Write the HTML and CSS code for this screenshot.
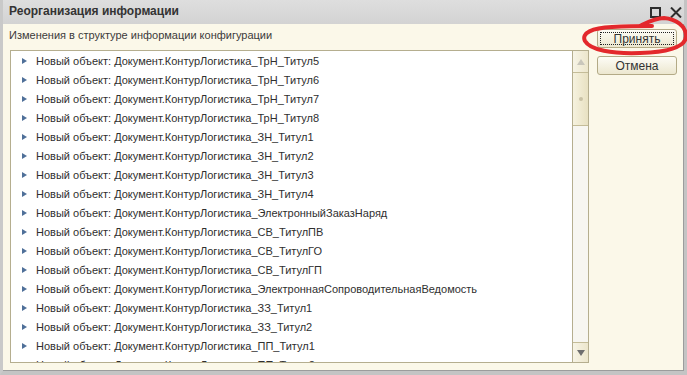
FILE: index.html
```html
<!DOCTYPE html>
<html lang="ru">
<head>
<meta charset="utf-8">
<title>Реорганизация информации</title>
<link rel="stylesheet" href="styles.css">
</head>
<body>
<div class="window">
  <div class="titlebar">
    <span class="title">Реорганизация информации</span>
    <div class="title-icons">
      <span class="icon-max"></span>
      <svg class="icon-close" width="12" height="11" viewBox="0 0 12 11"><path d="M1 0.5 L11 10.5 M11 0.5 L1 10.5" stroke="#2e2e2e" stroke-width="2"/></svg>
    </div>
  </div>
  <div class="content">
    <div class="main">
      <div class="label">Изменения в структуре информации конфигурации</div>
      <div class="listbox">
        <ul class="rows">
          <li class="row"><span class="tri"></span>Новый объект: Документ.КонтурЛогистика_ТрН_Титул5</li>
          <li class="row"><span class="tri"></span>Новый объект: Документ.КонтурЛогистика_ТрН_Титул6</li>
          <li class="row"><span class="tri"></span>Новый объект: Документ.КонтурЛогистика_ТрН_Титул7</li>
          <li class="row"><span class="tri"></span>Новый объект: Документ.КонтурЛогистика_ТрН_Титул8</li>
          <li class="row"><span class="tri"></span>Новый объект: Документ.КонтурЛогистика_ЗН_Титул1</li>
          <li class="row"><span class="tri"></span>Новый объект: Документ.КонтурЛогистика_ЗН_Титул2</li>
          <li class="row"><span class="tri"></span>Новый объект: Документ.КонтурЛогистика_ЗН_Титул3</li>
          <li class="row"><span class="tri"></span>Новый объект: Документ.КонтурЛогистика_ЗН_Титул4</li>
          <li class="row"><span class="tri"></span>Новый объект: Документ.КонтурЛогистика_ЭлектронныйЗаказНаряд</li>
          <li class="row"><span class="tri"></span>Новый объект: Документ.КонтурЛогистика_СВ_ТитулПВ</li>
          <li class="row"><span class="tri"></span>Новый объект: Документ.КонтурЛогистика_СВ_ТитулГО</li>
          <li class="row"><span class="tri"></span>Новый объект: Документ.КонтурЛогистика_СВ_ТитулГП</li>
          <li class="row"><span class="tri"></span>Новый объект: Документ.КонтурЛогистика_ЭлектроннаяСопроводительнаяВедомость</li>
          <li class="row"><span class="tri"></span>Новый объект: Документ.КонтурЛогистика_ЗЗ_Титул1</li>
          <li class="row"><span class="tri"></span>Новый объект: Документ.КонтурЛогистика_ЗЗ_Титул2</li>
          <li class="row"><span class="tri"></span>Новый объект: Документ.КонтурЛогистика_ПП_Титул1</li>
          <li class="row"><span class="tri"></span>Новый объект: Документ.КонтурЛогистика_ПП_Титул2</li>
        </ul>
        <div class="scrollbar">
          <div class="sb-btn"><span class="arrow-up"></span></div>
          <div class="sb-thumb"><span class="grip"></span></div>
          <div class="sb-track"></div>
          <div class="sb-btn sb-down"><span class="arrow-down"></span></div>
        </div>
      </div>
    </div>
    <div class="buttons">
      <button class="btn btn-default"><span class="focus">Принять</span></button>
      <button class="btn">Отмена</button>
    </div>
  </div>
  <svg class="annotation" width="687" height="80" viewBox="0 0 687 80">
    <path d="M640 26 C 648 22, 655 18, 664 18 C 676 19, 686 26, 686 36 C 686 47, 668 52, 640 53 C 612 54, 590 50, 585 41 C 581 33, 592 28, 612 27 C 630 26, 645 26, 652 26" fill="none" stroke="#e3282c" stroke-width="4" stroke-linecap="round"/>
  </svg>
</div>
</body>
</html>
```

FILE: styles.css
```css
* { box-sizing: border-box; }
html, body { margin: 0; padding: 0; }
body {
  width: 687px;
  height: 375px;
  overflow: hidden;
  font-family: "Liberation Sans", Arial, sans-serif;
  background: #c8c8c8;
}
.window {
  position: relative;
  width: 687px;
  height: 375px;
  display: flex;
  flex-direction: column;
  background: #d6d6d6;
  border-left: 3px solid #c9c9c9;
  border-right: 3px solid #c4c4c4;
  border-bottom: 4px solid #c4c4c4;
}
.titlebar {
  height: 24px;
  flex: none;
  display: flex;
  align-items: center;
  justify-content: space-between;
  padding: 0 2px 2px 6px;
  background: linear-gradient(#dedede, #d3d3d3);
}
.title {
  font-weight: bold;
  font-size: 12px;
  color: #333;
}
.title-icons {
  display: flex;
  align-items: center;
  gap: 9px;
  padding-top: 3px;
}
.icon-max {
  width: 11px;
  height: 11px;
  border: 2px solid #2e2e2e;
}
.content {
  flex: 1;
  display: flex;
  background: #fbf8e9;
  border-right: 1px solid #9c9c9c;
  border-bottom: 1px solid #9c9c9c;
  padding: 0 0 0 7px;
}
.main {
  width: 579px;
  display: flex;
  flex-direction: column;
}
.label {
  font-size: 11px;
  line-height: 16px;
  color: #3b3b3b;
  padding-top: 3px;
  margin-left: -1px;
  margin-bottom: 7px;
}
.listbox {
  height: 313px;
  border: 1px solid #b5ae8f;
  background: #fff;
  display: flex;
  overflow: hidden;
}
.rows {
  flex: 1;
  margin: 0;
  padding: 0;
  list-style: none;
  overflow: hidden;
}
.row {
  height: 19px;
  display: flex;
  align-items: center;
  padding-left: 11px;
  font-size: 11px;
  color: #2f2f2f;
  white-space: nowrap;
}
.tri {
  width: 0;
  height: 0;
  border-top: 3.5px solid transparent;
  border-bottom: 3.5px solid transparent;
  border-left: 5px solid #4f7099;
  margin-right: 9px;
  margin-top: 1px;
}
.scrollbar {
  width: 16px;
  flex: none;
  display: flex;
  flex-direction: column;
  border-left: 1px solid #b5ae8f;
  background: #f7f6f1;
}
.sb-btn {
  height: 22px;
  display: flex;
  align-items: center;
  justify-content: center;
  background: linear-gradient(90deg, #f7f4e6, #ece6cc);
  border-bottom: 1px solid #c4bc98;
}
.sb-down {
  height: 20px;
  border-bottom: none;
  border-top: 1px solid #c4bc98;
}
.arrow-up {
  width: 0; height: 0;
  border-left: 4px solid transparent;
  border-right: 4px solid transparent;
  border-bottom: 6px solid #c9c6bb;
}
.arrow-down {
  width: 0; height: 0;
  border-left: 4px solid transparent;
  border-right: 4px solid transparent;
  border-top: 6px solid #6e6e6e;
}
.sb-thumb {
  height: 53px;
  display: flex;
  align-items: center;
  justify-content: center;
  background: linear-gradient(90deg, #f6f2df, #e8e1c2);
  border-bottom: 1px solid #c4bc98;
}
.grip {
  width: 4px;
  height: 4px;
  border-radius: 50%;
  background: #c9c2a6;
}
.sb-track { flex: 1; }
.buttons {
  display: flex;
  flex-direction: column;
  gap: 8px;
  padding: 5px 0 0 8px;
}
.btn {
  width: 80px;
  height: 19px;
  padding: 0;
  font-family: "Liberation Sans", Arial, sans-serif;
  font-size: 12px;
  color: #333;
  background: linear-gradient(#fdfcf6, #ece7cf);
  border: 1px solid #b3aa86;
  border-radius: 3px;
  display: flex;
  align-items: center;
  justify-content: center;
}
.btn-default { padding: 2px; }
.focus {
  flex: 1;
  align-self: stretch;
  display: flex;
  align-items: center;
  justify-content: center;
  border: 1px dotted #222;
}
.annotation {
  position: absolute;
  left: -3px;
  top: 0;
  pointer-events: none;
}
```
